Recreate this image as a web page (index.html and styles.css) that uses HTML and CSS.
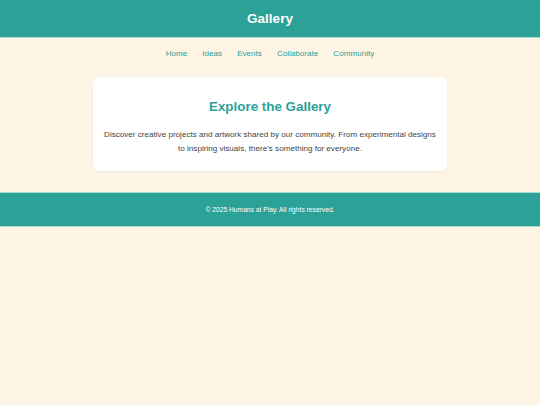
FILE: index.html
```html
<!DOCTYPE html>
<html lang="en">
<head>
<meta charset="utf-8">
<title>Gallery</title>
<link rel="stylesheet" href="styles.css">
</head>
<body>
<header class="site-header">
  <h1 class="site-title">Gallery</h1>
</header>
<nav class="site-nav">
  <a href="#">Home</a>
  <a href="#">Ideas</a>
  <a href="#">Events</a>
  <a href="#">Collaborate</a>
  <a href="#">Community</a>
</nav>
<main class="content">
  <section class="card">
    <h2 class="card-title">Explore the Gallery</h2>
    <p class="card-text">Discover creative projects and artwork shared by our community. From experimental designs to inspiring visuals, there’s something for everyone.</p>
  </section>
</main>
<footer class="site-footer">
  <p>© 2025 Humans at Play. All rights reserved.</p>
</footer>
</body>
</html>
```
FILE: styles.css
```css
html, body {
  margin: 0;
  padding: 0;
}
body {
  background: #fef4e4;
  font-family: "Liberation Sans", Arial, sans-serif;
  color: #444;
  font-size: 8px;
}
.site-header {
  background: #2ba197;
  height: 37px;
  border-bottom: 1px solid #a9dcd3;
  display: flex;
  align-items: center;
  justify-content: center;
}
.site-title {
  margin: 0;
  color: #fff;
  font-size: 13.5px;
  font-weight: bold;
  line-height: 15px;
}
.site-nav {
  display: flex;
  justify-content: center;
  gap: 15px;
  padding: 11px 0 10px;
  line-height: 10px;
}
.site-nav a {
  color: #2ba197;
  text-decoration: none;
  font-size: 8.1px;
}
.content {
  display: flex;
  justify-content: center;
  padding-top: 8px;
}
.card {
  box-sizing: border-box;
  width: 354px;
  background: #fff;
  border-radius: 5px;
  box-shadow: 0 1px 3px rgba(0,0,0,0.05);
  padding: 22px 10px 15px;
  text-align: center;
}
.card-title {
  margin: 0 0 14px;
  color: #2ba197;
  font-size: 13.4px;
  line-height: 15px;
  font-weight: bold;
}
.card-text {
  margin: 0;
  font-size: 8.1px;
  line-height: 14px;
  color: #444;
}
.site-footer {
  margin-top: 21px;
  background: #2ba197;
  border-top: 1px solid #a9dcd3;
  border-bottom: 1px solid #a9dcd3;
  height: 33px;
  display: flex;
  align-items: center;
  justify-content: center;
}
.site-footer p {
  margin: 0;
  color: #fff;
  font-size: 6.7px;
  line-height: 8px;
}
```
